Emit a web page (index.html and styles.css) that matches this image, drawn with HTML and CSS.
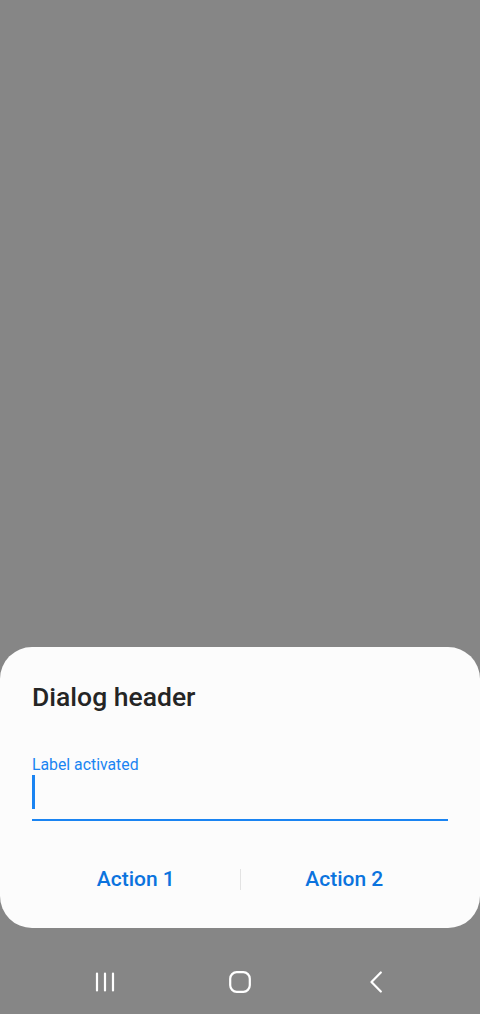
FILE: index.html
```html
<!DOCTYPE html>
<html>
<head>
<meta charset="utf-8">
<link rel="stylesheet" href="styles.css">
</head>
<body>
<div class="screen">
  <div class="scrim"></div>
  <div class="dialog">
    <h1 class="title">Dialog header</h1>
    <div class="field">
      <div class="label">Label activated</div>
      <div class="input"><span class="cursor"></span></div>
    </div>
    <div class="actions">
      <button class="action">Action 1</button>
      <span class="divider"></span>
      <button class="action">Action 2</button>
    </div>
  </div>
  <div class="navbar">
    <svg class="nav-icon" width="20" height="20" viewBox="0 0 20 20">
      <path d="M2 1.5v17M10 1.5v17M18 1.5v17" stroke="#fff" stroke-width="2.2" stroke-linecap="round" fill="none"/>
    </svg>
    <svg class="nav-icon" width="22" height="22" viewBox="0 0 22 22">
      <rect x="1.2" y="1.2" width="19.6" height="19.6" rx="6.5" stroke="#fff" stroke-width="2.2" fill="none"/>
    </svg>
    <svg class="nav-icon" width="14" height="22" viewBox="0 0 14 22">
      <path d="M11.8 1.5L2.5 11l9.3 9.5" stroke="#fff" stroke-width="2.2" stroke-linecap="round" stroke-linejoin="round" fill="none"/>
    </svg>
  </div>
</div>
</body>
</html>
```
FILE: styles.css
```css
html, body {
  margin: 0;
  padding: 0;
  background: #868686;
}
.screen {
  width: 480px;
  height: 1014px;
  display: flex;
  flex-direction: column;
  font-family: Roboto, "Noto Sans", sans-serif;
}
.scrim {
  height: 647px;
  flex: none;
}
.dialog {
  height: 281px;
  flex: none;
  box-sizing: border-box;
  background: #fcfcfc;
  border-radius: 32px;
  padding: 0 32px;
  display: flex;
  flex-direction: column;
}
.title {
  margin: 0;
  padding-top: 34px;
  font-size: 26.5px;
  line-height: 32px;
  font-weight: 500;
  color: #252525;
}
.field {
  margin-top: 42px;
  display: flex;
  flex-direction: column;
}
.label {
  font-size: 15.8px;
  line-height: 20px;
  color: #1a84f2;
}
.input {
  height: 46px;
  border-bottom: 2px solid #1a84f2;
  box-sizing: border-box;
}
.cursor {
  display: block;
  width: 2.5px;
  height: 34px;
  background: #1a84f2;
}
.actions {
  margin-top: 47px;
  display: flex;
  align-items: center;
  height: 22px;
}
.action {
  flex: 1;
  border: none;
  background: none;
  padding: 0;
  font-family: Roboto, "Noto Sans", sans-serif;
  font-size: 21px;
  font-weight: 500;
  line-height: 22px;
  color: #0b73de;
}
.divider {
  width: 1px;
  height: 21px;
  background: #e3e3e3;
}
.navbar {
  flex: 1;
  display: flex;
  align-items: center;
  justify-content: center;
  padding-top: 22px;
  padding-right: 3px;
}
.nav-icon {
  display: block;
}
.navbar .nav-icon:nth-child(1) { margin-right: 114px; }
.navbar .nav-icon:nth-child(2) { margin-right: 118px; }
```
